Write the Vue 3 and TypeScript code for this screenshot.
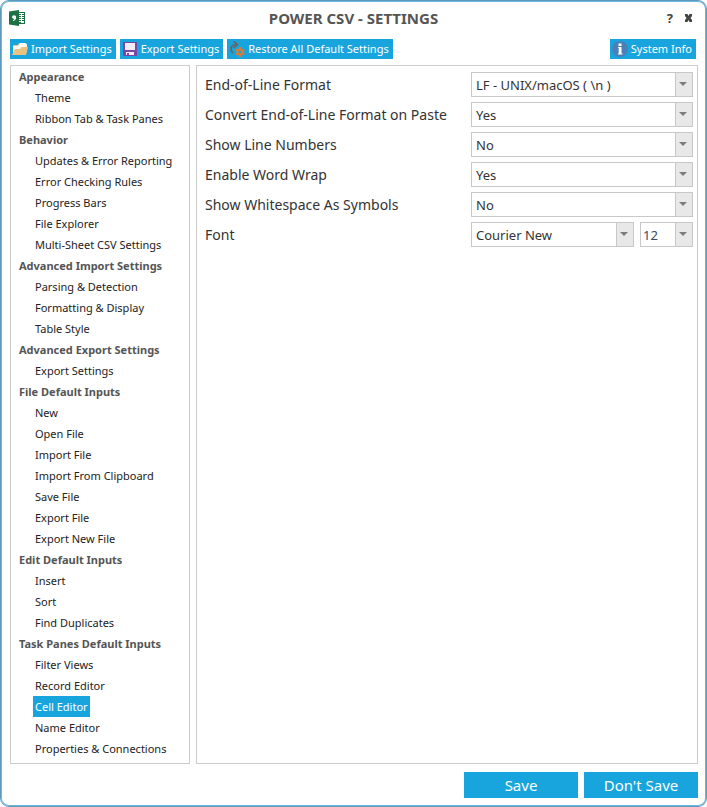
<script setup lang="ts">
import { ref } from 'vue'

interface Section {
  title: string
  items: string[]
}

interface Option {
  id: string
  label: string
  value: string
  choices: string[]
}

const sections: Section[] = [
  { title: 'Appearance', items: ['Theme', 'Ribbon Tab & Task Panes'] },
  {
    title: 'Behavior',
    items: [
      'Updates & Error Reporting',
      'Error Checking Rules',
      'Progress Bars',
      'File Explorer',
      'Multi-Sheet CSV Settings',
    ],
  },
  {
    title: 'Advanced Import Settings',
    items: ['Parsing & Detection', 'Formatting & Display', 'Table Style'],
  },
  { title: 'Advanced Export Settings', items: ['Export Settings'] },
  {
    title: 'File Default Inputs',
    items: [
      'New',
      'Open File',
      'Import File',
      'Import From Clipboard',
      'Save File',
      'Export File',
      'Export New File',
    ],
  },
  { title: 'Edit Default Inputs', items: ['Insert', 'Sort', 'Find Duplicates'] },
  {
    title: 'Task Panes Default Inputs',
    items: [
      'Filter Views',
      'Record Editor',
      'Cell Editor',
      'Name Editor',
      'Properties & Connections',
    ],
  },
]

const selected = ref('Cell Editor')

const options = ref<Option[]>([
  { id: 'eol', label: 'End-of-Line Format', value: 'LF - UNIX/macOS ( \\n )', choices: ['LF - UNIX/macOS ( \\n )'] },
  { id: 'convert', label: 'Convert End-of-Line Format on Paste', value: 'Yes', choices: ['Yes', 'No'] },
  { id: 'lines', label: 'Show Line Numbers', value: 'No', choices: ['Yes', 'No'] },
  { id: 'wrap', label: 'Enable Word Wrap', value: 'Yes', choices: ['Yes', 'No'] },
  { id: 'symbols', label: 'Show Whitespace As Symbols', value: 'No', choices: ['Yes', 'No'] },
])

const fontName = ref('Courier New')
const fontSize = ref('12')
</script>

<template>
  <div class="window">
    <header class="titlebar">
      <svg class="app-icon" width="16" height="16" viewBox="0 0 16 16">
        <path d="M9 2h7v12H9z" fill="#1e7145" />
        <path d="M9 3h6v10H9z" fill="#fff" />
        <path d="M10 4h2v1h-2zM13 4h2v1h-2zM10 6h2v1h-2zM13 6h2v1h-2zM10 8h2v1h-2zM13 8h2v1h-2zM10 10h2v1h-2zM13 10h2v1h-2zM10 12h2v1h-2z" fill="#1e7145" />
        <path d="M0 1.500 10 0v16L0 14.500z" fill="#1e7145" />
        <path d="M5 5.200c1.300 0 2.100.9 2.100 2.300 0 1.800-1.100 3-2.900 3.500l-.3-.8c.9-.3 1.300-.8 1.400-1.300-1.200.1-2.200-.6-2.200-1.800S3.900 5.200 5 5.200z" fill="#fff" />
      </svg>
      <h1>POWER CSV - SETTINGS</h1>
      <div class="window-controls">
        <button type="button" aria-label="Help">?</button>
        <button type="button" aria-label="Close">
          <svg width="7" height="8" viewBox="0 0 7 8">
            <path d="M0 0h2.500l1 2 1-2H7v2L5.500 4 7 6v2H4.500l-1-2-1 2H0V6l1.500-2L0 2z" fill="#444" />
          </svg>
        </button>
      </div>
    </header>

    <div class="toolbar">
      <button type="button">
        <svg width="16" height="14" viewBox="0 0 16 14">
          <path d="M1 13V4l1-1h4l1.500-2h6L15 2.500V10z" fill="#fffaf0" />
          <path d="M1 3.500h5L8 1" fill="none" stroke="#e8c78d" />
          <path d="M0 13 3 7h5l1.500-2H16l-2 8z" fill="#e9c283" />
        </svg>
        Import Settings
      </button>
      <button type="button">
        <svg width="16" height="14" viewBox="-1 0 16 14">
          <path d="M0 0h14v14H1l-1-1z" fill="#7a45a5" />
          <path d="M2 1h10v7H2zM3 10h8v3H3z" fill="#f1edf5" />
          <path d="M4 11h2v2H4z" fill="#7a45a5" />
        </svg>
        Export Settings
      </button>
      <button type="button">
        <svg width="16" height="16" viewBox="0 0 16 16">
          <path d="M4 12A5 5 0 0 1 3 5Q4 3.500 7 3.500" fill="none" stroke="#666" stroke-width="1.700" />
          <path d="M4.500 0 8.500 3.500 4.500 7" fill="none" stroke="#666" stroke-width="1.700" />
          <circle cx="11" cy="11" r="2.500" fill="none" stroke="#e07b2e" stroke-width="2" />
          <path d="M11 6v3M11 13v3M6.700 8.500l2.600 1.500M12.700 12l2.600 1.500M6.700 13.500 9.300 12M12.700 10l2.600-1.500" stroke="#e07b2e" stroke-width="2" />
        </svg>
        Restore All Default Settings
      </button>
      <button type="button" class="info">
        <svg width="16" height="16" viewBox="0 0 16 16">
          <circle cx="8" cy="8" r="8" fill="#4a80b8" />
          <path d="M6.500 2.500h3v2.500h-3zM6 6h3.500v6.500h1v1H6v-1h.7V7H6z" fill="#fff" />
        </svg>
        System Info
      </button>
    </div>

    <main class="panels">
      <nav class="sidebar" aria-label="Settings sections">
        <section v-for="section in sections" :key="section.title">
          <h2>{{ section.title }}</h2>
          <ul>
            <li v-for="item in section.items" :key="item">
              <button
                type="button"
                :class="{ active: item === selected }"
                @click="selected = item"
              >{{ item }}</button>
            </li>
          </ul>
        </section>
      </nav>

      <form class="content" @submit.prevent>
        <div v-for="option in options" :key="option.id" class="row">
          <label :for="option.id">{{ option.label }}</label>
          <div class="fields">
            <span class="drop">
              <select :id="option.id" v-model="option.value">
                <option v-for="choice in option.choices" :key="choice">{{ choice }}</option>
              </select>
            </span>
          </div>
        </div>
        <div class="row">
          <label for="font-name">Font</label>
          <div class="fields">
            <span class="drop">
              <select id="font-name" v-model="fontName">
                <option>Courier New</option>
                <option>Consolas</option>
              </select>
            </span>
            <span class="drop size">
              <select v-model="fontSize" aria-label="Font size">
                <option>10</option>
                <option>12</option>
                <option>14</option>
              </select>
            </span>
          </div>
        </div>
      </form>
    </main>

    <footer class="actions">
      <button type="button">Save</button>
      <button type="button">Don't Save</button>
    </footer>
  </div>
</template>

<style>
body {
  background: #fff;
}
</style>

<style scoped>
.window {
  box-sizing: border-box;
  min-height: 100vh;
  display: flex;
  flex-direction: column;
  padding: 0 8px 8px;
  border: 1px solid #6199bb;
  border-radius: 9px;
  box-shadow: inset 0 0 0 1px #68b8e0;
  background: #fff;
  color: #333;
  font-family: "Noto Sans", "Open Sans", sans-serif;
  font-size: 11px;
}

button,
select {
  margin: 0;
  border: 0;
  font: inherit;
}

.titlebar {
  display: grid;
  grid-template-columns: 1fr auto 1fr;
  align-items: center;
  height: 34px;
}

h1 {
  margin: 0;
  color: #555;
  font-size: 15px;
  line-height: 20px;
}

.window-controls {
  display: flex;
  justify-content: flex-end;
  align-items: center;
  gap: 12px;
  padding-right: 6px;
}

.window-controls button {
  padding: 0;
  display: flex;
  background: none;
  color: #444;
  font-size: 13px;
  font-weight: 700;
}

.toolbar {
  display: flex;
  gap: 4px;
  padding: 4px 1px 6px;
}

.toolbar button {
  display: flex;
  align-items: center;
  gap: 3px;
  height: 20px;
  padding: 0 4px 0 2px;
  background: #18a5de;
  color: #fff;
  line-height: 20px;
  white-space: nowrap;
}

.toolbar .info {
  margin-left: auto;
  margin-right: 1px;
}

.panels {
  flex: 1;
  display: flex;
  gap: 6px;
  padding: 0 0 0 1px;
}

.sidebar,
.content {
  box-sizing: border-box;
  border: 1px solid #ccc;
}

.sidebar {
  width: 180px;
  flex: none;
  padding: 0 0 4px 8px;
}

.sidebar h2 {
  margin: 0;
  color: #555;
  font-size: 11px;
  line-height: 21px;
  white-space: nowrap;
}

.sidebar ul {
  margin: 0;
  padding: 0 0 0 14px;
  list-style: none;
}

.sidebar li {
  display: flex;
}

.sidebar li button {
  height: 21px;
  padding: 0 2px;
  background: none;
  color: #222;
  line-height: 21px;
  white-space: nowrap;
}

.sidebar li .active {
  background: #18a5de;
  color: #fff;
}

.content {
  flex: 1;
  min-width: 0;
  display: flex;
  flex-direction: column;
  gap: 5px;
  padding: 6px 4px 6px 8px;
}

.row {
  display: flex;
  align-items: center;
}

.row label {
  flex: 1;
  font-size: 14px;
  line-height: 25px;
  white-space: nowrap;
}

.fields {
  width: 222px;
  flex: none;
  display: flex;
  gap: 6px;
}

.drop {
  position: relative;
  flex: 1;
  display: flex;
}

.drop.size {
  flex: 0 0 53px;
}

.drop select {
  appearance: none;
  box-sizing: border-box;
  width: 100%;
  height: 25px;
  padding: 0 20px 0 4px;
  border: 1px solid #c8c8c8;
  border-radius: 0;
  background: linear-gradient(#c8c8c8, #c8c8c8) right 16px top / 1px 100% no-repeat,
    linear-gradient(#e8e8e8, #e8e8e8) right / 16px 100% no-repeat, #fff;
  color: #333;
  font-size: 13px;
}

.drop.size select {
  padding-left: 2px;
  color: #3b4a63;
}

.drop::after {
  content: "";
  position: absolute;
  top: 10px;
  right: 6px;
  border: solid transparent;
  border-width: 4px 4px 0;
  border-top-color: #7c7c7c;
  pointer-events: none;
}

.actions {
  display: flex;
  justify-content: flex-end;
  gap: 6px;
  padding-top: 8px;
}

.actions button {
  width: 114px;
  height: 26px;
  background: #18a5de;
  color: #fff;
  font-size: 15px;
}
</style>
